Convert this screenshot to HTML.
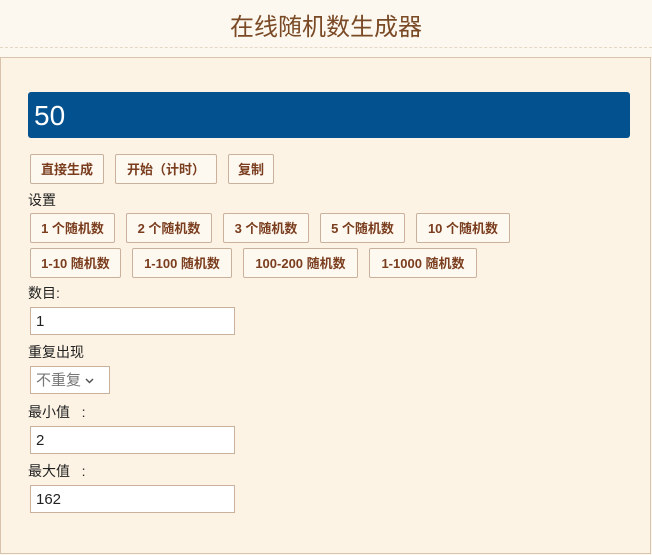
<!DOCTYPE html>
<html><head><meta charset="utf-8"><style>
body{margin:0;width:652px;height:555px;background:#fdf8ef;font-family:"Liberation Sans","Noto Sans CJK SC",sans-serif;position:relative;overflow:hidden}
.h{position:absolute;left:0;top:0;width:652px;height:47px;text-align:center;font-size:24px;line-height:56px;color:#7a4a26;border-bottom:1px dashed #e4d7c4}
.p{position:absolute;left:0;top:57px;width:649px;height:495px;background:#fcf3e4;border:1px solid #d9c3ad}
.bar{position:absolute;left:28px;top:92px;width:602px;height:46px;background:#03528f;border-radius:3px;color:#fff;font-size:28px;line-height:48px;padding-left:6px;box-sizing:border-box}
.b{position:absolute;height:30px;border:1px solid #c9b19c;background:#fdf8f0;color:#7a3d1e;font-weight:bold;font-size:13px;line-height:30px;text-align:center;box-sizing:border-box;border-radius:2px}
.l{position:absolute;left:28px;font-size:14px;color:#222}
.i{position:absolute;left:30px;width:205px;height:28px;background:#fff;border:1px solid #c9b19c;box-sizing:border-box;font-size:15px;line-height:28px;padding-left:5px;color:#222}
</style></head><body>
<div class="h">在线随机数生成器</div>
<div class="p"></div>
<div class="bar">50</div>
<div class="b" style="left:30px;top:154px;width:74px">直接生成</div>
<div class="b" style="left:115px;top:154px;width:102px">开始（计时）</div>
<div class="b" style="left:228px;top:154px;width:46px">复制</div>
<div class="l" style="top:190px">设置</div>
<div class="b" style="left:30px;top:213px;width:85px">1 个随机数</div>
<div class="b" style="left:126px;top:213px;width:86px">2 个随机数</div>
<div class="b" style="left:223px;top:213px;width:86px">3 个随机数</div>
<div class="b" style="left:320px;top:213px;width:85px">5 个随机数</div>
<div class="b" style="left:416px;top:213px;width:94px">10 个随机数</div>
<div class="b" style="left:30px;top:248px;width:91px">1-10 随机数</div>
<div class="b" style="left:132px;top:248px;width:100px">1-100 随机数</div>
<div class="b" style="left:243px;top:248px;width:115px">100-200 随机数</div>
<div class="b" style="left:369px;top:248px;width:108px">1-1000 随机数</div>
<div class="l" style="top:283px">数目:</div>
<div class="i" style="top:307px">1</div>
<div class="l" style="top:342px">重复出现</div>
<div class="i" style="top:366px;width:80px;color:#777;font-size:15px">不重复 <svg width="9" height="6" viewBox="0 0 9 6" style="vertical-align:middle"><path d="M1 1l3.5 3.5L8 1" stroke="#555" stroke-width="1.5" fill="none"/></svg></div>
<div class="l" style="top:402px">最小值&nbsp;&nbsp;&nbsp;:</div>
<div class="i" style="top:426px">2</div>
<div class="l" style="top:461px">最大值&nbsp;&nbsp;&nbsp;:</div>
<div class="i" style="top:485px">162</div>
</body></html>
